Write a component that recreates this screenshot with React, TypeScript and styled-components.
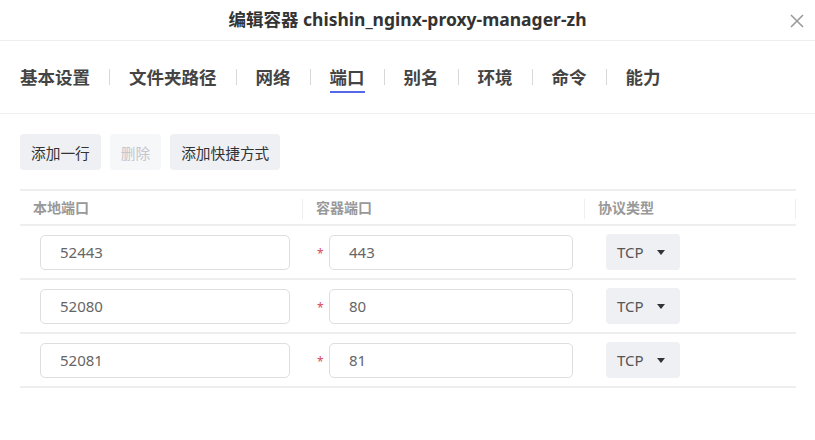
import React from "react";
import styled, { createGlobalStyle } from "styled-components";

const Global = createGlobalStyle`
  html, body { margin: 0; padding: 0; background: #fff; }
  body { font-family: "Noto Sans", "Noto Sans CJK SC", sans-serif; color: #333; }
  * { box-sizing: border-box; }
`;

const Dialog = styled.div`
  width: 815px;
  height: 440px;
  background: #fff;
  display: flex;
  flex-direction: column;
`;

const Header = styled.div`
  height: 41px;
  border-bottom: 1px solid #eeeeee;
  display: flex;
  align-items: center;
  justify-content: center;
  position: relative;
`;

const Title = styled.div`
  font-size: 17.5px;
  font-weight: 700;
  color: #333;
  margin-top: -4px;
`;

const Close = styled.button`
  position: absolute;
  right: 10px;
  top: 13px;
  width: 16px;
  height: 16px;
  border: none;
  background: none;
  padding: 0;
  cursor: pointer;
`;

const Tabs = styled.div`
  height: 73px;
  border-bottom: 1px solid #eeeeee;
  display: flex;
  align-items: center;
  padding-left: 20px;
`;

const Tab = styled.div<{ $active?: boolean }>`
  position: relative;
  font-size: 17.5px;
  font-weight: 700;
  color: #444;
  line-height: 24px;
  margin-top: -1px;
  &::after {
    content: "";
    display: ${(p) => (p.$active ? "block" : "none")};
    position: absolute;
    left: 0;
    right: 0;
    bottom: -4px;
    height: 2px;
    background: #5468e8;
  }
`;

const Sep = styled.div`
  width: 1px;
  height: 16px;
  background: #d8d8d8;
  margin: 0 19px;
`;

const Body = styled.div`
  padding: 20px 19px 0 20px;
`;

const Toolbar = styled.div`
  display: flex;
  gap: 9px;
  margin-bottom: 19px;
`;

const Btn = styled.button<{ $disabled?: boolean }>`
  height: 36px;
  padding: 0 11px;
  border: none;
  border-radius: 4px;
  background: ${(p) => (p.$disabled ? "#f6f7f9" : "#eff0f4")};
  color: ${(p) => (p.$disabled ? "#c4c6cc" : "#333")};
  font-family: inherit;
  font-size: 14.7px;
`;

const Table = styled.div`
  width: 776px;
  border-top: 2px solid #eeeeee;
`;

const Row = styled.div<{ $head?: boolean }>`
  display: grid;
  grid-template-columns: 283px 282px 211px;
  height: ${(p) => (p.$head ? "35px" : "54px")};
  border-bottom: 2px solid #eeeeee;
  align-items: center;
`;

const HeadCell = styled.div`
  height: 100%;
  display: flex;
  align-items: center;
  padding-left: 13px;
  padding-bottom: 2px;
  font-size: 14px;
  font-weight: 700;
  color: #999;
  position: relative;
  &::after {
    content: "";
    position: absolute;
    right: 0;
    top: 8px;
    height: 20px;
    width: 1px;
    background: #eeeeee;
  }
`;

const Cell = styled.div<{ $pad: number; $padRight: number }>`
  display: flex;
  align-items: center;
  padding-left: ${(p) => p.$pad}px;
  padding-right: ${(p) => p.$padRight}px;
`;

const Star = styled.span`
  color: #d9475c;
  font-size: 12px;
  width: 13px;
  line-height: 1;
  padding-top: 3px;
  padding-left: 1px;
`;

const Input = styled.div`
  flex: 1;
  height: 35px;
  border: 1px solid #dedede;
  border-radius: 5px;
  display: flex;
  align-items: center;
  padding-left: 19px;
  font-size: 15px;
  color: #666;
`;

const Select = styled.div`
  width: 74px;
  height: 36px;
  border-radius: 4px;
  background: #eff0f4;
  display: flex;
  align-items: center;
  padding-left: 11px;
  gap: 13px;
  font-size: 15px;
  color: #555;
`;

const Caret = styled.span`
  width: 0;
  height: 0;
  border-left: 4px solid transparent;
  border-right: 4px solid transparent;
  border-top: 5px solid #333;
`;

const tabs = ["基本设置", "文件夹路径", "网络", "端口", "别名", "环境", "命令", "能力"];
const rows = [
  ["52443", "443"],
  ["52080", "80"],
  ["52081", "81"],
];

export default function App() {
  return (
    <>
      <Global />
      <Dialog>
        <Header>
          <Title>编辑容器 chishin_nginx-proxy-manager-zh</Title>
          <Close aria-label="close">
            <svg width="16" height="16" viewBox="0 0 16 16">
              <path d="M2 2 L14 14 M14 2 L2 14" stroke="#9a9a9a" strokeWidth="1.6" />
            </svg>
          </Close>
        </Header>
        <Tabs>
          {tabs.map((t, i) => (
            <React.Fragment key={t}>
              {i > 0 && <Sep />}
              <Tab $active={t === "端口"}>{t}</Tab>
            </React.Fragment>
          ))}
        </Tabs>
        <Body>
          <Toolbar>
            <Btn>添加一行</Btn>
            <Btn $disabled>删除</Btn>
            <Btn>添加快捷方式</Btn>
          </Toolbar>
          <Table>
            <Row $head>
              <HeadCell>本地端口</HeadCell>
              <HeadCell>容器端口</HeadCell>
              <HeadCell>协议类型</HeadCell>
            </Row>
            {rows.map(([a, b]) => (
              <Row key={a}>
                <Cell $pad={20} $padRight={13}>
                  <Input>{a}</Input>
                </Cell>
                <Cell $pad={13} $padRight={12}>
                  <Star>*</Star>
                  <Input>{b}</Input>
                </Cell>
                <Cell $pad={21} $padRight={0}>
                  <Select>
                    TCP
                    <Caret />
                  </Select>
                </Cell>
              </Row>
            ))}
          </Table>
        </Body>
      </Dialog>
    </>
  );
}
